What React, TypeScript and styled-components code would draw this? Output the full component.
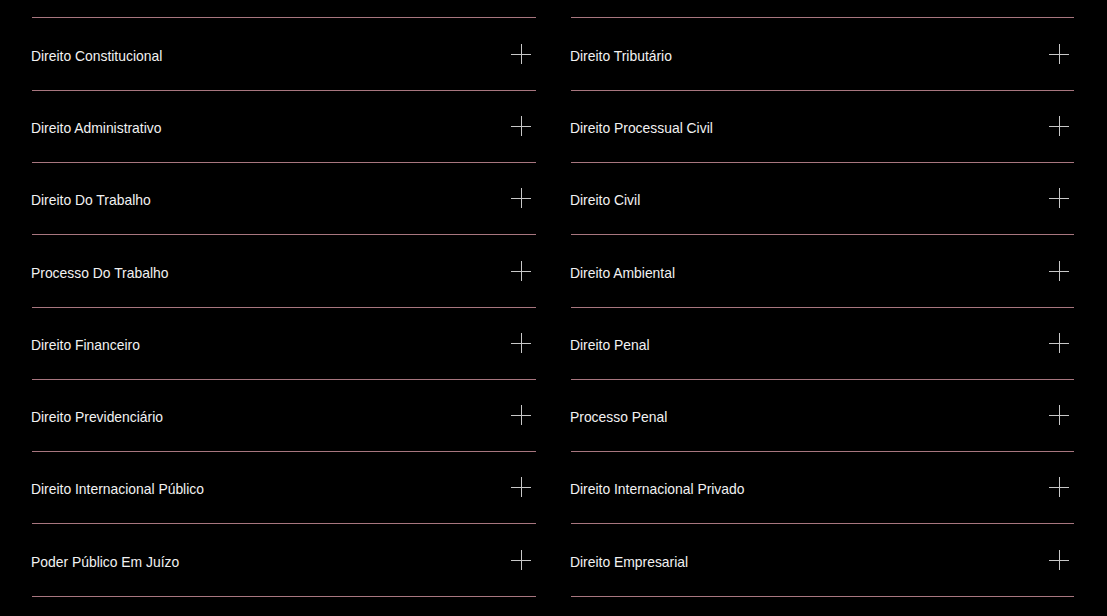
import React from "react";
import styled, { createGlobalStyle } from "styled-components";

const left = [
  "Direito Constitucional",
  "Direito Administrativo",
  "Direito Do Trabalho",
  "Processo Do Trabalho",
  "Direito Financeiro",
  "Direito Previdenciário",
  "Direito Internacional Público",
  "Poder Público Em Juízo",
];

const right = [
  "Direito Tributário",
  "Direito Processual Civil",
  "Direito Civil",
  "Direito Ambiental",
  "Direito Penal",
  "Processo Penal",
  "Direito Internacional Privado",
  "Direito Empresarial",
];

const tallRows = [0, 3, 7];

const GlobalStyle = createGlobalStyle`
  html, body {
    margin: 0;
    background: #000;
  }
  body {
    font-family: "Liberation Sans", Arial, sans-serif;
  }
`;

function Plus() {
  return (
    <PlusIcon width="20" height="20" viewBox="0 0 20 20">
      <line x1="10" y1="0" x2="10" y2="20" stroke="#c8c8c8" strokeWidth="1" />
      <line x1="0" y1="10" x2="20" y2="10" stroke="#c8c8c8" strokeWidth="1" />
    </PlusIcon>
  );
}

function Column({ items }: { items: string[] }) {
  return (
    <List>
      {items.map((item, index) => (
        <Item key={item} $tall={tallRows.includes(index)}>
          <Label>{item}</Label>
          <Plus />
        </Item>
      ))}
    </List>
  );
}

export default function App() {
  return (
    <>
      <GlobalStyle />
      <Page>
        <Column items={left} />
        <Column items={right} />
      </Page>
    </>
  );
}

const Page = styled.div`
  display: grid;
  grid-template-columns: 504px 503px;
  column-gap: 35px;
  padding: 17px 32px 0;
`;

const List = styled.div`
  border-top: 1px solid #a8767f;
`;

const Item = styled.div<{ $tall?: boolean }>`
  box-sizing: border-box;
  height: ${(p) => (p.$tall ? 73 : 72)}px;
  display: flex;
  align-items: center;
  justify-content: space-between;
  padding: 0 5px 1px 0;
  border-bottom: 1px solid #a8767f;
  cursor: pointer;
`;

const Label = styled.span`
  color: #f2f2f2;
  font-size: 13.9px;
  padding-top: 4px;
  margin-left: -1px;
`;

const PlusIcon = styled.svg`
  display: block;
  shape-rendering: crispEdges;
`;
